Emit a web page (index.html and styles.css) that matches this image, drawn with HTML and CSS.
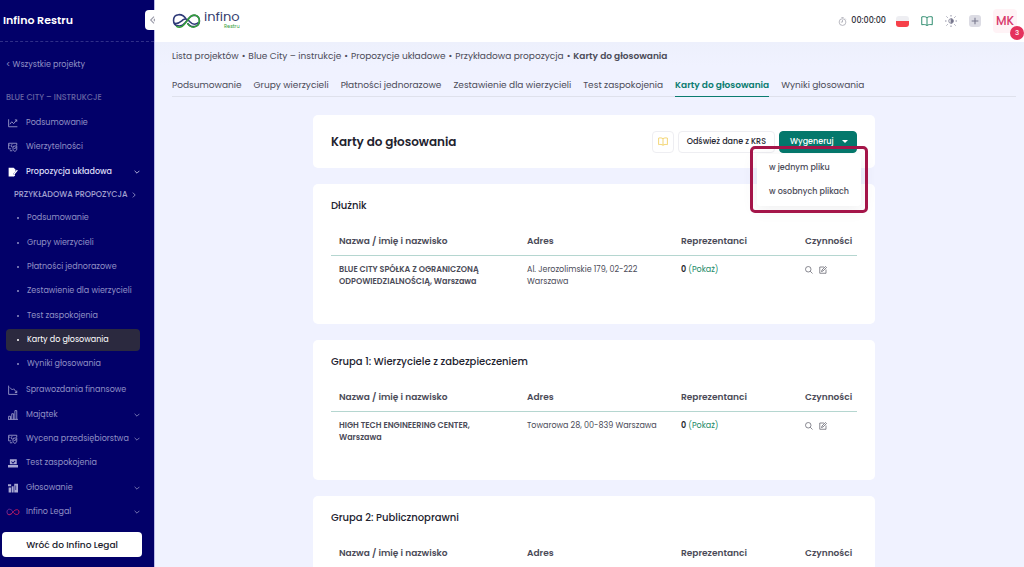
FILE: index.html
```html
<!DOCTYPE html>
<html lang="pl">
<head>
<meta charset="utf-8">
<meta name="viewport" content="width=device-width, initial-scale=1">
<title>Infino Restru – Karty do głosowania</title>
<link rel="stylesheet" href="styles.css">
</head>
<body>
<svg class="defs" aria-hidden="true">
  <symbol id="chart" viewBox="0 0 16 16"><path d="M1 2v12h14M3 10l3-4 3 3 5-6M11 3h3v3" /></symbol>
  <symbol id="debt" viewBox="0 0 16 16"><path d="M5 11H1V2h13v3M1 5h2M7 4a2 2 0 1 0 0 4M3 14h4M8 7l6-1v5c0 2-1 3-3 4-2-1-3-2-3-4zM10 10l1 1 2-3" /></symbol>
  <symbol id="decline" viewBox="0 0 16 16"><path d="M1 1v14h14M3 4l4 4 2-2 5 6M11 12h3V9" /></symbol>
  <symbol id="bars" viewBox="0 0 16 16"><path d="M1 15V10h3v5M6 15V6h3v9M11 15V1h3v14M0 15h16" /></symbol>
  <symbol id="down" viewBox="0 0 10 10"><path d="M1 3l4 4 4-4" /></symbol>
  <symbol id="book" viewBox="0 0 16 14"><path d="M8 2.500C6 1 3.500 1 1 1.500v10.500c2.500-.5 5-.5 7 1 2-1.500 4.500-1.500 7-1V1.500C12.500 1 10 1 8 2.500zM8 2.500V13" /></symbol>
  <symbol id="search" viewBox="0 0 16 16"><circle cx="6.500" cy="6.500" r="5.500" /><path d="M10.500 10.500L15 15" /></symbol>
  <symbol id="edit" viewBox="0 0 16 16"><path d="M10 2H1.500v12.500H14V7M5 11l1-3L13 1l2 2-7 7z" /></symbol>
</svg>
<div class="app">
  <aside class="sidebar">
    <div class="brand">Infino Restru</div>
    <a class="all" href="#">&lt; Wszystkie projekty</a>
    <div class="project">BLUE CITY – INSTRUKCJE</div>
    <nav class="menu" aria-label="Projekt">
      <a href="#"><svg class="icon"><use href="#chart"/></svg><span>Podsumowanie</span></a>
      <a href="#"><svg class="icon"><use href="#debt"/></svg><span>Wierzytelności</span></a>
      <a class="open" href="#"><svg class="icon" viewBox="0 0 16 16"><path class="solid" d="M1 1h8l3 3v3l-4 4v4H1z"/><path d="M9 12l6-7M9 12v2l2-1" stroke-width="2"/></svg><span>Propozycja układowa</span><svg class="chev"><use href="#down"/></svg></a>
      <a class="proposal" href="#">PRZYKŁADOWA PROPOZYCJA <svg class="chev right"><use href="#down"/></svg></a>
      <a class="sub" href="#">Podsumowanie</a>
      <a class="sub" href="#">Grupy wierzycieli</a>
      <a class="sub" href="#">Płatności jednorazowe</a>
      <a class="sub" href="#">Zestawienie dla wierzycieli</a>
      <a class="sub" href="#">Test zaspokojenia</a>
      <a class="sub current" href="#" aria-current="page">Karty do głosowania</a>
      <a class="sub last" href="#">Wyniki głosowania</a>
      <a href="#"><svg class="icon"><use href="#decline"/></svg><span>Sprawozdania finansowe</span></a>
      <a href="#"><svg class="icon"><use href="#bars"/></svg><span>Majątek</span><svg class="chev"><use href="#down"/></svg></a>
      <a href="#"><svg class="icon"><use href="#debt"/></svg><span>Wycena przedsiębiorstwa</span><svg class="chev"><use href="#down"/></svg></a>
      <a href="#"><svg class="icon" viewBox="0 0 16 16"><path class="solid" fill-rule="evenodd" d="M3 2h11v8H3zM5 6l3 3 4-4-1-1-3 3-2-2zM0 11h16v4H0z"/></svg><span>Test zaspokojenia</span></a>
      <a href="#"><svg class="icon" viewBox="0 0 16 16"><path class="solid" fill-rule="evenodd" d="M0 2h5v3H0zM1 7h4v8H1zM6 5h3v10H6zM10 1h6v14h-6zM12 4v7h1V4z"/></svg><span>Głosowanie</span><svg class="chev"><use href="#down"/></svg></a>
      <a href="#"><svg class="icon legal" viewBox="0 0 28 18"><path d="M14 9C10 15 2 16 2 9s8-8 12 0" stroke="#6a2a96"/><path d="M3 13c5 4 9-1 12-5s11-6 11 1-8 6-11 1" stroke="#c2185b"/></svg><span>Infino Legal</span><svg class="chev"><use href="#down"/></svg></a>
    </nav>
    <button class="back" type="button">Wróć do Infino Legal</button>
    <button class="collapse" type="button" aria-label="Zwiń menu"><svg viewBox="0 0 12 12"><path d="M6 2L2 6l4 4M10 2L6 6l4 4"/></svg></button>
  </aside>
  <div class="page">
    <header class="top">
      <a class="logo" href="#">
        <svg class="mark" viewBox="0 0 56 34"><path d="M27 13C21 2 3 1 3 16c0 12 15 14 22 5L33 11C39 3 53 5 53 17c0 13-17 14-23 4" stroke="#2e3a78"/><path d="M4 21c7 3 12-2 17-6 7-5 11 0 14 4 5 6 12 5 16 1" stroke="#2e3a78"/><path d="M8 27c9 6 15-2 21-10C36 6 42 3 48 7c7 5 6 16-1 20-6 4-13 1-17-5" stroke="#35a03a"/></svg>
        <span class="name">infino<small>Restru</small></span>
      </a>
      <div class="tools">
        <span class="timer"><svg viewBox="0 0 16 16"><circle cx="8" cy="9" r="6"/><path d="M8 5v4H5M6 1h4M13 3l1 1"/></svg>00:00:00</span>
        <button class="flag" type="button" aria-label="Polski"></button>
        <button class="tool green" type="button" aria-label="Instrukcja"><svg><use href="#book"/></svg></button>
        <button class="tool sun" type="button" aria-label="Motyw"><svg viewBox="0 0 16 16"><circle cx="8" cy="8" r="3"/><path class="half" d="M8 5a3 3 0 0 1 0 6z"/><path d="M8 0v2M8 14v2M0 8h2M14 8h2M2 2l1.500 1.500M12.500 12.500L14 14M2 14l1.500-1.500M12.500 3.500L14 2"/></svg></button>
        <button class="tool plus" type="button" aria-label="Dodaj"><svg viewBox="0 0 12 12"><path d="M6 2v8M2 6h8"/></svg></button>
        <button class="avatar" type="button">MK<span class="badge">3</span></button>
      </div>
    </header>
    <main class="main">
      <nav class="crumbs" aria-label="Ścieżka">
        <a href="#">Lista projektów</a><i>•</i><a href="#">Blue City – instrukcje</a><i>•</i><a href="#">Propozycje układowe</a><i>•</i><a href="#">Przykładowa propozycja</a><i>•</i><b>Karty do głosowania</b>
      </nav>
      <nav class="tabs" aria-label="Zakładki">
        <a href="#">Podsumowanie</a><a href="#">Grupy wierzycieli</a><a href="#">Płatności jednorazowe</a><a href="#">Zestawienie dla wierzycieli</a><a href="#">Test zaspokojenia</a><a class="active" href="#">Karty do głosowania</a><a href="#">Wyniki głosowania</a>
      </nav>
      <div class="content">
        <section class="card head">
          <h1>Karty do głosowania</h1>
          <div class="actions">
            <button class="btn guide" type="button" aria-label="Instrukcja"><svg><use href="#book"/></svg></button>
            <button class="btn refresh" type="button">Odśwież dane z KRS</button>
            <div class="dropdown">
              <button class="btn primary" type="button" aria-expanded="true">Wygeneruj <span class="caret"></span></button>
              <div class="options"><a href="#">w jednym pliku</a><a href="#">w osobnych plikach</a></div>
              <div class="highlight"></div>
            </div>
          </div>
        </section>
        <section class="card">
          <h2>Dłużnik</h2>
          <table>
            <thead><tr><th class="c1">Nazwa / imię i nazwisko</th><th class="c2">Adres</th><th class="c3">Reprezentanci</th><th>Czynności</th></tr></thead>
            <tbody><tr><td><b>BLUE CITY SPÓŁKA Z OGRANICZONĄ ODPOWIEDZIALNOŚCIĄ, Warszawa</b></td><td>Al. Jerozolimskie 179, 02-222 Warszawa</td><td><b class="count">0</b> <a href="#">(Pokaż)</a></td><td><div class="ops"><button type="button" aria-label="Podgląd"><svg><use href="#search"/></svg></button><button type="button" aria-label="Edytuj"><svg><use href="#edit"/></svg></button></div></td></tr></tbody>
          </table>
        </section>
        <section class="card">
          <h2>Grupa 1: Wierzyciele z zabezpieczeniem</h2>
          <table>
            <thead><tr><th class="c1">Nazwa / imię i nazwisko</th><th class="c2">Adres</th><th class="c3">Reprezentanci</th><th>Czynności</th></tr></thead>
            <tbody><tr><td><b>HIGH TECH ENGINEERING CENTER, Warszawa</b></td><td>Towarowa 28, 00-839 Warszawa</td><td><b class="count">0</b> <a href="#">(Pokaż)</a></td><td><div class="ops"><button type="button" aria-label="Podgląd"><svg><use href="#search"/></svg></button><button type="button" aria-label="Edytuj"><svg><use href="#edit"/></svg></button></div></td></tr></tbody>
          </table>
        </section>
        <section class="card">
          <h2>Grupa 2: Publicznoprawni</h2>
          <table>
            <thead><tr><th class="c1">Nazwa / imię i nazwisko</th><th class="c2">Adres</th><th class="c3">Reprezentanci</th><th>Czynności</th></tr></thead>
          </table>
        </section>
      </div>
    </main>
  </div>
</div>
</body>
</html>
```

FILE: styles.css
```css
* { box-sizing: border-box; }
body { margin: 0; font-family: Poppins, Inter, "Open Sans", sans-serif; font-size: 9px; line-height: 12px; color: #4b4b58; background: #f0f2ff; }
a { color: inherit; text-decoration: none; }
button { font: inherit; color: inherit; border: 0; padding: 0; background: none; cursor: pointer; }
svg { fill: none; stroke: currentColor; stroke-width: 1.3; flex: none; }
.defs { position: absolute; width: 0; height: 0; }
.solid { fill: currentColor; stroke: none; }

.app { display: flex; height: 100vh; overflow: hidden; }

/* Sidebar */
.sidebar { position: relative; flex: none; width: 155px; display: flex; flex-direction: column; padding-bottom: 10px; background: #020069; color: #9190c4; border-right: 1px solid #bcbce8; }
.brand { height: 42px; padding: 14px 3px; border-bottom: 1px dashed #302f88; color: #fff; font-size: 11px; font-weight: 600; }
.all { padding: 17px 6px 0; font-size: 8px; }
.project { padding: 21px 6px 6px; font-size: 8px; font-weight: 500; color: #6563a1; }
.menu { flex: 1; display: flex; flex-direction: column; padding: 1px 14px 8px 6px; font-size: 8px; }
.menu a { flex: 1 0 18px; display: flex; align-items: center; padding-left: 2px; white-space: nowrap; }
.icon { width: 10px; height: 10px; margin-right: 8px; color: #a9a8d2; }
.legal { width: 14px; margin-left: -2px; margin-right: 6px; stroke-width: 2; }
.chev { width: 6px; height: 6px; margin-left: auto; }
.menu .open { color: #dcdcf5; font-weight: 500; }
.open .icon { color: #fff; }
.menu .proposal { margin: -1px 0; padding-left: 8px; font-weight: 500; color: #a3a2d0; }
.proposal .chev { margin-left: 3px; transform: rotate(-90deg); }
.menu .sub { padding-left: 11px; border-radius: 4px; }
.sub::before { content: ""; flex: none; width: 2px; height: 2px; margin-right: 8px; border-radius: 50%; background: currentColor; }
.menu .last { margin-bottom: 2px; }
.menu .current { flex-basis: 16px; margin: 1px 0; background: #2b293f; color: #fff; }
.back { height: 25px; margin: 0 12px 0 2px; border-radius: 4px; background: #fff; color: #20202c; font-weight: 500; }
.collapse { position: absolute; top: 10px; right: -1px; width: 10px; height: 20px; border-radius: 4px 0 0 4px; background: #fff; color: #9a9aa8; overflow: hidden; }
.collapse svg { display: block; width: 10px; height: 10px; margin-left: 4px; }

/* Top bar */
.page { flex: 1; min-width: 0; display: flex; flex-direction: column; }
.top { flex: none; height: 42px; display: flex; align-items: center; justify-content: space-between; padding: 0 7px 0 17px; background: #fff; }
.logo { display: flex; align-items: center; gap: 3px; }
.mark { width: 29px; height: 18px; stroke-width: 3; }
.name { display: flex; flex-direction: column; padding-bottom: 2px; color: #36406f; font-size: 13px; line-height: 14px; }
.name small { align-self: flex-end; font-size: 5px; line-height: 6px; color: #35a03a; }
.tools { display: flex; align-items: center; gap: 12px; }
.timer { display: flex; align-items: center; gap: 4px; margin-right: -2px; font-size: 8px; font-weight: 500; color: #2c2c38; }
.timer svg { width: 9px; height: 9px; color: #a0a0ac; }
.flag { width: 13px; height: 11px; border-radius: 3px; background: linear-gradient(#eeeef2 45%, #f6404a 45%); }
.tool { display: grid; place-items: center; width: 12px; height: 12px; }
.tool svg { width: 12px; height: 12px; }
.green { color: #2b8a6c; }
.sun { color: #8c8ca0; }
.half { fill: #62627a; }
.plus { border-radius: 3px; background: #dcdce4; color: #77778c; }
.plus svg { width: 10px; height: 10px; }
.avatar { position: relative; width: 24px; height: 24px; border-radius: 4px; background: #fff3f6; color: #d8386c; font-size: 12px; font-weight: 500; }
.badge { position: absolute; right: -7px; bottom: -7px; width: 14px; height: 14px; border-radius: 50%; background: #e5315d; color: #fff; font-size: 7px; line-height: 14px; }

/* Page body */
.main { flex: 1; min-height: 0; padding: 8px 8px 0 17px; overflow: hidden auto; scrollbar-width: none; background: linear-gradient(#edf0fc, #f0f2ff 24px); }
.crumbs { display: flex; white-space: nowrap; }
.crumbs i { margin: 0 3px; font-style: normal; }
.crumbs b { font-weight: 600; }
.tabs { display: flex; gap: 12px; margin-top: 11px; border-bottom: 1px solid #dfe1ec; white-space: nowrap; }
.tabs a { padding: 6px 0 5px; margin-bottom: -1px; border-bottom: 1px solid transparent; }
.tabs .active { color: #0a7c70; border-color: #0a7c70; font-weight: 600; }
.content { display: grid; gap: 16px; max-width: 562px; margin: 18px auto 16px; }
.card { min-height: 140px; padding: 16px 18px; border-radius: 5px; background: #fff; }
.head { min-height: 53px; display: flex; align-items: center; justify-content: space-between; padding: 0 18px; }
h1 { margin: 0; font-size: 12px; line-height: 16px; font-weight: 600; color: #22222e; }
h2 { margin: 0; font-size: 10px; line-height: 12px; font-weight: 500; color: #22222e; }
.actions { display: flex; gap: 4px; }
.btn { height: 22px; border: 1px solid #eeeef2; border-radius: 4px; background: #fff; font-size: 8px; font-weight: 500; color: #252530; }
.guide { display: grid; place-items: center; width: 22px; color: #f0cd58; }
.guide svg { width: 10px; height: 9px; }
.refresh { padding: 0 8px; }
.dropdown { position: relative; }
.primary { display: flex; align-items: center; gap: 8px; width: 78px; padding: 0 10px; border-color: #04786c; background: #04786c; color: #fff; }
.caret { border: 3px solid transparent; border-top-color: currentColor; border-bottom: 0; }
.options { position: absolute; top: 23px; right: -4px; z-index: 1; width: 104px; padding: 2px 0; border-radius: 4px; background: #fff; box-shadow: 0 3px 16px #50506418; font-size: 8px; font-weight: 500; white-space: nowrap; }
.options a { display: block; padding: 6px 12px; }
.highlight { position: absolute; top: 15px; right: -11px; z-index: 2; width: 118px; height: 67px; border: 3px solid #a41549; border-radius: 5px; pointer-events: none; }

/* Tables */
table { width: 100%; margin-top: 16px; border-collapse: collapse; table-layout: fixed; }
th { padding: 7px 8px 8px; border-bottom: 1px solid #b5d6d0; text-align: left; font-weight: 600; }
td { padding: 8px; vertical-align: top; font-size: 8px; }
td b { font-weight: 600; }
td a { color: #218a68; }
.count { color: #1c1c28; }
.c1 { width: 188px; }
.c2 { width: 154px; }
.c3 { width: 124px; }
.ops { display: flex; gap: 6px; padding-top: 2px; }
.ops svg { display: block; width: 8px; height: 8px; }
```
